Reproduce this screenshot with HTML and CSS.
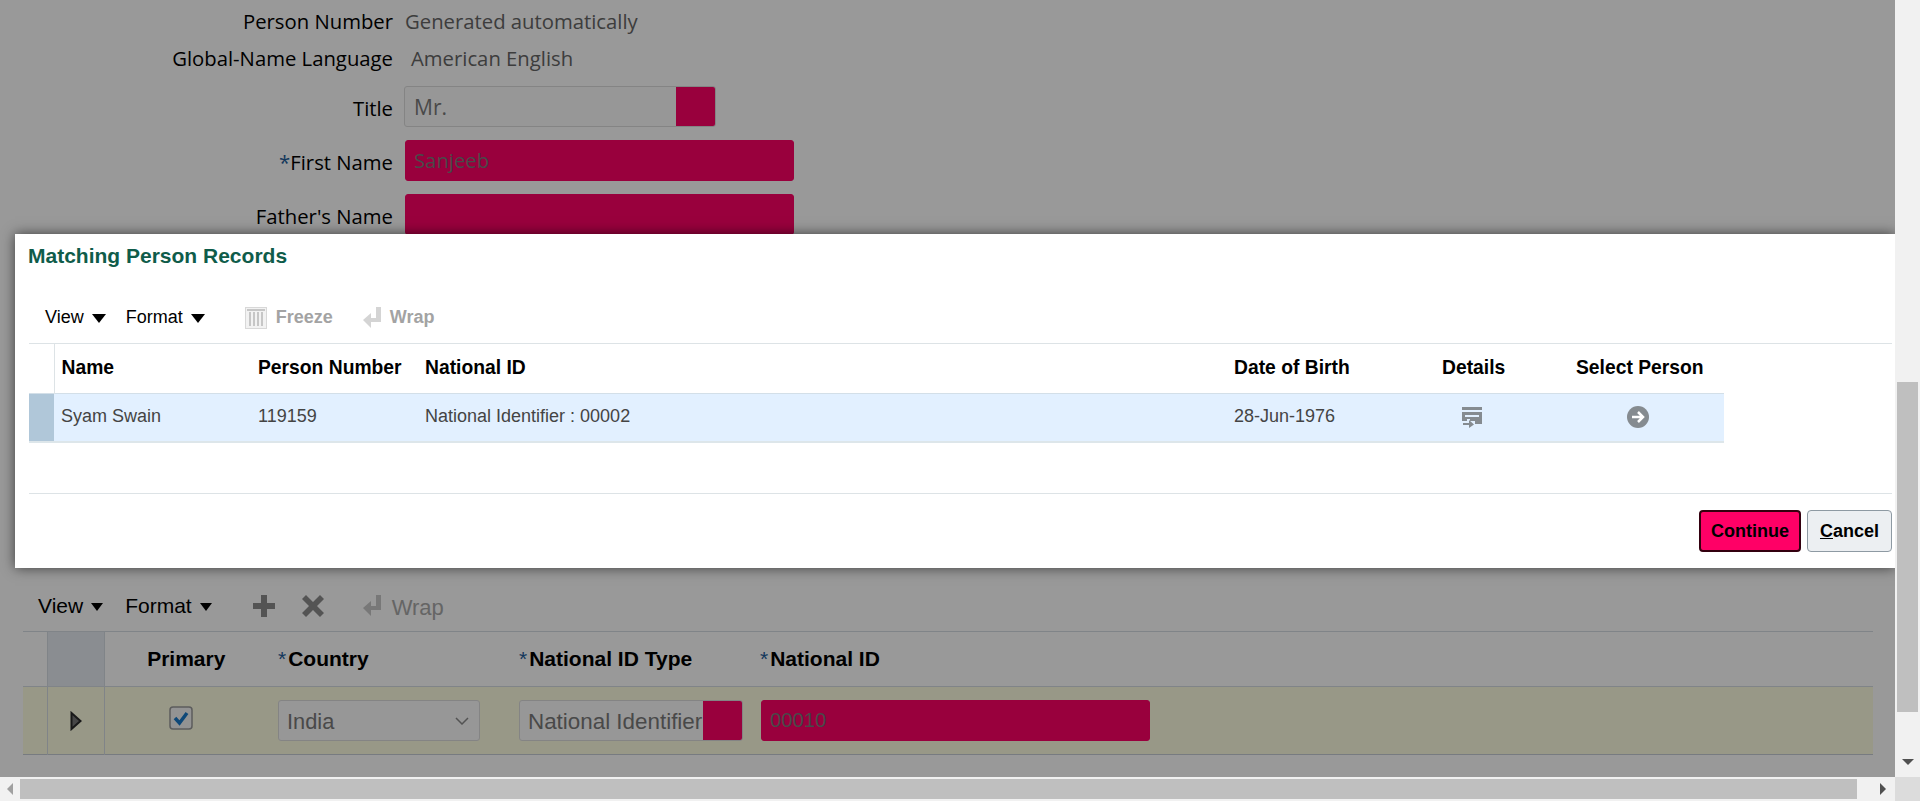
FILE: index.html
```html
<!DOCTYPE html>
<html lang="en">

<head>
    <meta charset="UTF-8">
    <meta name="viewport" content="width=device-width, initial-scale=1.0">
    <title>Matching Person Records</title>
    <link rel="stylesheet" href="styles.css">
</head>

<body>
    <div class="window">
        <main class="page">
            <section class="form">
                <div class="form-row plain">
                    <label>Person Number</label>
                    <span class="value">Generated automatically</span>
                </div>
                <div class="form-row plain">
                    <label>Global-Name Language</label>
                    <span class="value indent">American English</span>
                </div>
                <div class="form-row">
                    <label>Title</label>
                    <div class="field title-field"><span class="field-text">Mr.</span><span class="pink-end"></span></div>
                </div>
                <div class="form-row">
                    <label><span class="req">*</span>First Name</label>
                    <div class="field wide required">Sanjeeb</div>
                </div>
                <div class="form-row">
                    <label>Father's Name</label>
                    <div class="field wide required"></div>
                </div>
            </section>

            <section class="ids">
                <div class="toolbar page-toolbar">
                    <span class="menu">View <i class="caret"></i></span>
                    <span class="menu">Format <i class="caret"></i></span>
                    <svg class="tool-plus" width="22" height="22" viewBox="0 0 22 22"><path d="M8 0h6v8h8v6h-8v8H8v-8H0V8h8z" fill="#8d8d8d"/></svg>
                    <svg class="tool-x" width="24" height="24" viewBox="0 0 24 24"><path d="M5 1l7 7 7-7 4 4-7 7 7 7-4 4-7-7-7 7-4-4 7-7-7-7z" fill="#8d8d8d"/></svg>
                    <svg class="tool-wrap" width="20" height="24" viewBox="0 0 20 24"><path d="M14 1h5v15H9v6L1 14l8-7v5h5z" fill="#c8c8c8"/></svg>
                    <span class="tool-label">Wrap</span>
                </div>
                <table class="id-table">
                    <colgroup>
                        <col class="c-blank"><col class="c-side"><col class="c-primary"><col class="c-country"><col class="c-type"><col>
                    </colgroup>
                    <tr>
                        <th></th>
                        <th class="side-head"></th>
                        <th class="center">Primary</th>
                        <th><span class="req">*</span>Country</th>
                        <th><span class="req">*</span>National ID Type</th>
                        <th><span class="req">*</span>National ID</th>
                    </tr>
                    <tr class="band">
                        <td></td>
                        <td class="side-cell">
                            <svg class="expand" width="12" height="20" viewBox="0 0 12 20"><path d="M1.500 2l9 8-9 8z" fill="#777" stroke="#2a2a2a" stroke-width="2"/></svg>
                        </td>
                        <td class="center">
                            <svg class="check" width="24" height="24" viewBox="0 0 24 24"><rect x="1" y="1" width="22" height="22" rx="3" fill="#f6f6f6" stroke="#9a9a9a" stroke-width="1.500"/><path d="M6 12l4.500 5L18 7" fill="none" stroke="#1a78c8" stroke-width="3.500"/></svg>
                        </td>
                        <td>
                            <div class="field select-field"><span class="field-text">India</span>
                                <svg width="14" height="8" viewBox="0 0 14 8"><path d="M1 1l6 6 6-6" fill="none" stroke="#8a8a8a" stroke-width="1.500"/></svg>
                            </div>
                        </td>
                        <td>
                            <div class="field type-field"><span class="field-text">National Identifier</span><span class="pink-end"></span></div>
                        </td>
                        <td>
                            <div class="field id-field required">00010</div>
                        </td>
                    </tr>
                </table>
            </section>

            <div class="overlay"></div>

            <div class="dialog">
                <h2>Matching Person Records</h2>
                <div class="toolbar dialog-toolbar">
                    <span class="menu">View <i class="caret"></i></span>
                    <span class="menu">Format <i class="caret"></i></span>
                    <svg class="tool-freeze" width="22" height="22" viewBox="0 0 22 22"><rect x="0.500" y="0.500" width="21" height="21" fill="#f2f2f2" stroke="#d8d8d8"/><path d="M2 3h18M5 5v14M9 5v14M13 5v14M17 5v14" stroke="#c6c6c6" stroke-width="2" fill="none"/></svg>
                    <span class="tool-label">Freeze</span>
                    <svg class="tool-wrap" width="20" height="24" viewBox="0 0 20 24"><path d="M14 1h5v15H9v6L1 14l8-7v5h5z" fill="#d4d4d4"/></svg>
                    <span class="tool-label">Wrap</span>
                </div>
                <table class="match-table">
                    <colgroup>
                        <col class="m-side"><col class="m-name"><col class="m-num"><col class="m-id"><col class="m-dob"><col class="m-det"><col class="m-sel">
                    </colgroup>
                    <tr>
                        <th class="blank"></th>
                        <th>Name</th>
                        <th>Person Number</th>
                        <th>National ID</th>
                        <th>Date of Birth</th>
                        <th>Details</th>
                        <th>Select Person</th>
                    </tr>
                    <tr class="selected">
                        <td class="sel-mark"></td>
                        <td>Syam Swain</td>
                        <td>119159</td>
                        <td>National Identifier : 00002</td>
                        <td>28-Jun-1976</td>
                        <td class="icon-cell details-cell">
                            <svg width="22" height="22" viewBox="0 0 22 22"><path d="M1 1h20v3H1zM1 6h20v12h-7v-3H9v-2H6v2H1z" fill="#858b90"/><path d="M4 9h14v2H4z" fill="#e2f0ff"/><path d="M2 17h6v-3l5 4.500L8 22v-3H2z" fill="#858b90"/></svg>
                        </td>
                        <td class="icon-cell select-cell">
                            <svg width="22" height="22" viewBox="0 0 22 22"><circle cx="11" cy="11" r="11" fill="#858b90"/><path d="M5 11h10M11 6l5 5-5 5" fill="none" stroke="#fff" stroke-width="2.500"/></svg>
                        </td>
                    </tr>
                </table>
                <div class="dialog-footer">
                    <button class="btn btn-primary">Continue</button>
                    <button class="btn"><u>C</u>ancel</button>
                </div>
            </div>
        </main>

        <div class="vscroll">
            <i class="arrow up"></i>
            <div class="vtrack"><div class="vthumb"></div></div>
            <i class="arrow down"></i>
        </div>
        <div class="hscroll">
            <i class="arrow left"></i>
            <div class="hthumb"></div>
            <i class="arrow right"></i>
        </div>
        <div class="corner"></div>
    </div>
</body>

</html>
```

FILE: styles.css
```css
* {
    box-sizing: border-box;
}

html,
body {
    margin: 0;
    height: 100%;
    overflow: hidden;
}

body {
    font-family: "Open Sans", sans-serif;
    color: #000;
    background-color: #fff;
}

.window {
    display: grid;
    grid-template-columns: 1895px 25px;
    grid-template-rows: 777px 24px;
    height: 801px;
}

.page {
    position: relative;
    overflow: hidden;
    background-color: #fff;
}

.overlay {
    position: absolute;
    inset: 0;
    background-color: rgba(0, 0, 0, 0.4);
}

/* form */
.form {
    padding-top: 2px;
}

.form-row {
    display: grid;
    grid-template-columns: 393px auto;
    column-gap: 12px;
    align-items: center;
    height: 54px;
    font-size: 20.3px;
}

.form-row:nth-child(3) {
    height: 40px;
    margin: 10px 0 14px;
}

.form-row:nth-child(4),
.form-row:nth-child(5) {
    height: 40px;
    margin-bottom: 14px;
}

.form-row.plain {
    height: 37px;
}

.form-row label {
    text-align: right;
}

.form-row:not(.plain) label {
    padding-top: 2px;
}

.value {
    color: #666;
}

.indent {
    margin-left: 6px;
}

.req {
    color: #1f5c99;
    font-weight: normal;
}

th .req {
    margin-right: 2px;
}

.field {
    height: 41px;
    border: 1px solid #ddd;
    border-radius: 3px;
    background-color: #fcfcfc;
    color: #7a7a7a;
    font-size: 20.3px;
    line-height: 39px;
    padding-left: 8px;
}

.field.required {
    background-color: #ff0066;
    border-color: #ff0066;
}

.wide {
    width: 389px;
}

.title-field {
    display: flex;
    width: 312px;
    margin-left: -1px;
    padding-left: 9px;
    padding-right: 0;
    overflow: hidden;
}

.field-text {
    flex: 1;
    min-width: 0;
    padding-top: 1px;
    font-size: 21.8px;
    white-space: nowrap;
}

.title-field .field-text {
    font-size: 21px;
}

.type-field .field-text {
    font-size: 22.4px;
}

.pink-end {
    flex: none;
    width: 39px;
    margin: -1px 0;
    background-color: #ff0066;
}

/* bottom table */
.ids {
    padding-left: 23px;
    margin-top: 351px;
}

.toolbar {
    display: flex;
    align-items: center;
}

.menu {
    display: inline-flex;
    align-items: center;
    font-family: "Liberation Sans", Arial, sans-serif;
}

.caret {
    display: inline-block;
    width: 0;
    height: 0;
    margin: 2px 0 0 8px;
    border-left: 7px solid transparent;
    border-right: 7px solid transparent;
    border-top: 9px solid #000;
}

.tool-label {
    font-family: "Liberation Sans", Arial, sans-serif;
    font-weight: bold;
    color: #a3a3a3;
}

.page-toolbar {
    height: 46px;
    padding: 0 0 5px 15px;
    font-size: 21px;
}

.page-toolbar .caret {
    border-left-width: 6px;
    border-right-width: 6px;
    border-top-width: 8px;
}

.page-toolbar .menu:nth-child(2) {
    margin-left: 22px;
}

.tool-plus {
    margin-left: 41px;
}

.tool-x {
    margin-left: 26px;
}

.page-toolbar .tool-wrap {
    margin-left: 37px;
}

.page-toolbar .tool-label {
    margin: 4px 0 0 10px;
    font-size: 22px;
    font-weight: normal;
    color: #a9a9a9;
}

.id-table {
    width: 1850px;
    table-layout: fixed;
    border-collapse: collapse;
    font-family: "Liberation Sans", Arial, sans-serif;
}

.id-table tr {
    height: 55px;
    border-top: 1px solid #d6dde3;
}

.id-table .band {
    height: 68px;
    background-color: #fdfde2;
    border-bottom: 1px solid #c6ced6;
}

.c-blank {
    width: 24px;
}

.c-side {
    width: 57px;
}

.c-primary {
    width: 174px;
}

.c-country {
    width: 241px;
}

.c-type {
    width: 241px;
}

.id-table th {
    font-size: 21px;
    text-align: left;
    padding: 0;
}

.id-table td {
    padding: 0;
}

.id-table .center {
    text-align: center;
    padding-right: 10px;
}

.side-head {
    background-color: #e6ecf2;
    border-left: 1px solid #d6dde3;
    border-right: 1px solid #d6dde3;
}

.side-cell {
    border-left: 1px solid #d6dde3;
    border-right: 1px solid #d6dde3;
    text-align: center;
}

.expand {
    display: block;
    margin: 0 auto;
}

.check {
    display: block;
    margin: -6px auto 0;
    position: relative;
    left: -5px;
}

.select-field {
    display: flex;
    align-items: center;
    width: 202px;
    padding-right: 10px;
}

.type-field {
    display: flex;
    width: 224px;
    padding-right: 0;
    overflow: hidden;
}

.id-field {
    width: 389px;
    margin-left: 1px;
}

/* dialog */
.dialog {
    position: absolute;
    left: 15px;
    top: 234px;
    width: 1880px;
    height: 334px;
    padding: 0 3px 0 14px;
    background-color: #fff;
    box-shadow: 0 0 12px rgba(0, 0, 0, 0.6);
    font-family: "Liberation Sans", Arial, sans-serif;
}

.dialog h2 {
    margin: 0 0 0 -1px;
    padding: 11px 0 0;
    font-size: 21px;
    line-height: 22px;
    color: #0f5c4a;
}

.dialog-toolbar {
    height: 54px;
    margin-top: 23px;
    padding: 2px 0 0 16px;
    font-size: 18px;
    border-bottom: 1px solid #dde3e6;
}

.dialog-toolbar .menu:nth-child(2) {
    margin-left: 20px;
}

.tool-freeze {
    margin-left: 40px;
}

.dialog-toolbar .tool-label {
    margin-left: 9px;
}

.dialog-toolbar .tool-wrap {
    margin-left: 29px;
}

.dialog-toolbar .tool-label:last-child {
    margin-left: 8px;
}

.match-table {
    width: 1695px;
    table-layout: fixed;
    border-collapse: collapse;
    font-size: 18px;
}

.m-side {
    width: 25px;
}

.m-name {
    width: 197px;
}

.m-num {
    width: 167px;
}

.m-id {
    width: 809px;
}

.m-dob {
    width: 208px;
}

.m-det {
    width: 134px;
}

.match-table tr {
    height: 49px;
}

.match-table th {
    padding: 0 0 0 7px;
    text-align: left;
    font-size: 19.3px;
}

.match-table .blank {
    padding: 0;
    border-right: 1px solid #dde3e6;
}

.match-table td {
    padding: 0 0 1px 7px;
    color: #444;
}

.selected {
    background-color: #e2f0ff;
    border-top: 1px solid #d3dfe8;
    border-bottom: 2px solid #dde6ea;
}

.match-table .sel-mark {
    padding: 0;
    background-color: #b0c7d9;
}

.match-table .icon-cell {
    padding: 0;
}

.icon-cell svg {
    display: block;
}

.details-cell svg {
    margin-left: 26px;
}

.select-cell svg {
    margin-left: 58px;
}

.dialog-footer {
    display: flex;
    justify-content: flex-end;
    gap: 6px;
    margin-top: 50px;
    padding-top: 16px;
    border-top: 1px solid #dde3e6;
}

.btn {
    height: 42px;
    width: 85px;
    padding: 0;
    border: 1px solid #8e9aa3;
    border-radius: 4px;
    background-color: #eceff2;
    color: #000;
    font-family: "Liberation Sans", Arial, sans-serif;
    font-size: 18px;
    font-weight: bold;
}

.btn-primary {
    width: 102px;
    background-color: #ff0066;
    border: 2px solid #33000f;
}

/* browser scrollbars */
.vscroll {
    display: flex;
    flex-direction: column;
    align-items: center;
    grid-row: 1;
    grid-column: 2;
    background-color: #f1f1f1;
}

.vtrack {
    flex: 1;
    width: 100%;
    padding: 368px 2px 47px;
}

.vthumb {
    height: 100%;
    background-color: #bfbfbf;
}

.hscroll {
    display: flex;
    align-items: center;
    grid-row: 2;
    grid-column: 1;
    padding: 2px 0;
    height: 24px;
    background-color: #f1f1f1;
}

.hthumb {
    width: 1837px;
    height: 100%;
    margin-left: 7px;
    background-color: #bfbfbf;
}

.corner {
    background-color: #dcdcdc;
}

.arrow {
    display: block;
    width: 0;
    height: 0;
    flex: none;
}

.up {
    margin-top: 8px;
    border-left: 6px solid transparent;
    border-right: 6px solid transparent;
    border-bottom: 6px solid #f1f1f1;
}

.down {
    margin-bottom: 12px;
    border-left: 6px solid transparent;
    border-right: 6px solid transparent;
    border-top: 6px solid #505050;
}

.left {
    margin-left: 7px;
    border-top: 6px solid transparent;
    border-bottom: 6px solid transparent;
    border-right: 6px solid #a0a0a0;
}

.right {
    margin-left: 23px;
    border-top: 6px solid transparent;
    border-bottom: 6px solid transparent;
    border-left: 6px solid #505050;
}
```
